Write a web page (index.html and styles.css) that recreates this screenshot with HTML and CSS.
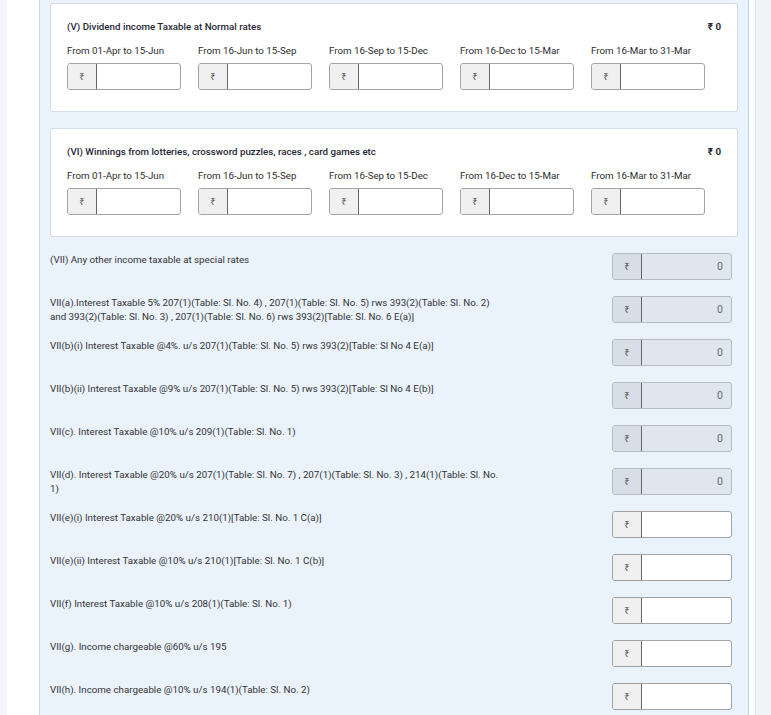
FILE: index.html
```html
<!DOCTYPE html>
<html lang="en">
<head>
    <meta charset="UTF-8" />
    <title>Income from Other Sources - Quarterly Breakup</title>
    <link rel="stylesheet" href="styles.css">
</head>
<body>
    <div class="page">
        <div class="gutter"></div>
        <div class="main">
            <div class="panel">

                <div class="card">
                    <div class="card-head">
                        <span class="card-title">(V) Dividend income Taxable at Normal rates</span>
                        <span class="card-total">₹ 0</span>
                    </div>
                    <div class="quarters">
                        <div class="quarter">
                            <label>From 01-Apr to 15-Jun</label>
                            <div class="amount"><span class="rs">₹</span><input type="text"></div>
                        </div>
                        <div class="quarter">
                            <label>From 16-Jun to 15-Sep</label>
                            <div class="amount"><span class="rs">₹</span><input type="text"></div>
                        </div>
                        <div class="quarter">
                            <label>From 16-Sep to 15-Dec</label>
                            <div class="amount"><span class="rs">₹</span><input type="text"></div>
                        </div>
                        <div class="quarter">
                            <label>From 16-Dec to 15-Mar</label>
                            <div class="amount"><span class="rs">₹</span><input type="text"></div>
                        </div>
                        <div class="quarter">
                            <label>From 16-Mar to 31-Mar</label>
                            <div class="amount"><span class="rs">₹</span><input type="text"></div>
                        </div>
                    </div>
                </div>

                <div class="card">
                    <div class="card-head">
                        <span class="card-title">(VI) Winnings from lotteries, crossword puzzles, races , card games etc</span>
                        <span class="card-total">₹ 0</span>
                    </div>
                    <div class="quarters">
                        <div class="quarter">
                            <label>From 01-Apr to 15-Jun</label>
                            <div class="amount"><span class="rs">₹</span><input type="text"></div>
                        </div>
                        <div class="quarter">
                            <label>From 16-Jun to 15-Sep</label>
                            <div class="amount"><span class="rs">₹</span><input type="text"></div>
                        </div>
                        <div class="quarter">
                            <label>From 16-Sep to 15-Dec</label>
                            <div class="amount"><span class="rs">₹</span><input type="text"></div>
                        </div>
                        <div class="quarter">
                            <label>From 16-Dec to 15-Mar</label>
                            <div class="amount"><span class="rs">₹</span><input type="text"></div>
                        </div>
                        <div class="quarter">
                            <label>From 16-Mar to 31-Mar</label>
                            <div class="amount"><span class="rs">₹</span><input type="text"></div>
                        </div>
                    </div>
                </div>

                <div class="line-item">
                    <div class="line-label">(VII) Any other income taxable at special rates</div>
                    <div class="amount readonly"><span class="rs">₹</span><input type="text" value="0" readonly></div>
                </div>
                <div class="line-item">
                    <div class="line-label">VII(a).Interest Taxable 5% 207(1)(Table: Sl. No. 4) , 207(1)(Table: Sl. No. 5) rws 393(2)(Table: Sl. No. 2) and 393(2)(Table: Sl. No. 3) , 207(1)(Table: Sl. No. 6) rws 393(2)[Table: Sl. No. 6 E(a)]</div>
                    <div class="amount readonly"><span class="rs">₹</span><input type="text" value="0" readonly></div>
                </div>
                <div class="line-item">
                    <div class="line-label">VII(b)(i) Interest Taxable @4%. u/s 207(1)(Table: Sl. No. 5) rws 393(2)[Table: Sl No 4 E(a)]</div>
                    <div class="amount readonly"><span class="rs">₹</span><input type="text" value="0" readonly></div>
                </div>
                <div class="line-item">
                    <div class="line-label">VII(b)(ii) Interest Taxable @9% u/s 207(1)(Table: Sl. No. 5) rws 393(2)[Table: Sl No 4 E(b)]</div>
                    <div class="amount readonly"><span class="rs">₹</span><input type="text" value="0" readonly></div>
                </div>
                <div class="line-item">
                    <div class="line-label">VII(c). Interest Taxable @10% u/s 209(1)(Table: Sl. No. 1)</div>
                    <div class="amount readonly"><span class="rs">₹</span><input type="text" value="0" readonly></div>
                </div>
                <div class="line-item">
                    <div class="line-label">VII(d). Interest Taxable @20% u/s 207(1)(Table: Sl. No. 7) , 207(1)(Table: Sl. No. 3) , 214(1)(Table: Sl. No. 1)</div>
                    <div class="amount readonly"><span class="rs">₹</span><input type="text" value="0" readonly></div>
                </div>
                <div class="line-item">
                    <div class="line-label">VII(e)(i) Interest Taxable @20% u/s 210(1)[Table: Sl. No. 1 C(a)]</div>
                    <div class="amount"><span class="rs">₹</span><input type="text"></div>
                </div>
                <div class="line-item">
                    <div class="line-label">VII(e)(ii) Interest Taxable @10% u/s 210(1)[Table: Sl. No. 1 C(b)]</div>
                    <div class="amount"><span class="rs">₹</span><input type="text"></div>
                </div>
                <div class="line-item">
                    <div class="line-label">VII(f) Interest Taxable @10% u/s 208(1)(Table: Sl. No. 1)</div>
                    <div class="amount"><span class="rs">₹</span><input type="text"></div>
                </div>
                <div class="line-item">
                    <div class="line-label">VII(g). Income chargeable @60% u/s 195</div>
                    <div class="amount"><span class="rs">₹</span><input type="text"></div>
                </div>
                <div class="line-item">
                    <div class="line-label">VII(h). Income chargeable @10% u/s 194(1)(Table: Sl. No. 2)</div>
                    <div class="amount"><span class="rs">₹</span><input type="text"></div>
                </div>

            </div>
        </div>
        <div class="rail"></div>
    </div>
</body>
</html>
```

FILE: styles.css
```css
body {
    margin: 0;
    padding: 0;
    background: #f3f5f9;
    font-family: Roboto, "Noto Sans", "DejaVu Sans", sans-serif;
    font-size: 9.75px;
    color: #333;
}

.page {
    display: flex;
    min-height: 715px;
}

.gutter {
    width: 7px;
    flex-shrink: 0;
    background: #f3f5f9;
}

.main {
    width: 748px;
    flex-shrink: 0;
    box-sizing: border-box;
    background: white;
    padding: 0 6px 0 32px;
}

.rail {
    flex: 1;
    background: #f2f4f8;
    border-left: 1px solid #e1e5ee;
}

.panel {
    min-height: 715px;
    box-sizing: border-box;
    background: #eaf2fc;
    border-left: 1px solid #c8dcf3;
    border-right: 1px solid #b9d4f1;
    padding: 3px 10px 10px 10px;
}

.card {
    background: white;
    border: 1px solid #d3dae6;
    border-radius: 3px;
    padding: 16px 16px 21px 16px;
    margin-bottom: 16px;
}

.card-head {
    display: flex;
    justify-content: space-between;
    line-height: 14px;
    margin-bottom: 10px;
}

.card-title {
    font-weight: 500;
    color: #1f2733;
}

.card-total {
    font-weight: 700;
    color: #1f2733;
}

.quarters {
    display: flex;
    gap: 17px;
}

.quarter {
    width: 114px;
}

.quarter label {
    display: block;
    line-height: 14px;
    margin-bottom: 5px;
    color: #2b2b2b;
}

.amount {
    display: flex;
    width: 114px;
    height: 27px;
    box-sizing: border-box;
    border: 1px solid #a3a3a3;
    border-radius: 3px;
    background: white;
    overflow: hidden;
}

.rs {
    width: 28px;
    flex-shrink: 0;
    display: flex;
    align-items: center;
    justify-content: center;
    background: #f0f0f0;
    border-right: 1px solid #666;
    font-family: "Noto Sans", "DejaVu Sans", sans-serif;
    font-size: 9.5px;
    color: #4a4a4a;
}

.amount input {
    flex: 1;
    min-width: 0;
    border: none;
    outline: none;
    background: transparent;
    padding: 0 8px 0 10px;
    font-family: Roboto, "Noto Sans", sans-serif;
    font-size: 10.5px;
    color: #666;
    text-align: right;
}

.amount.readonly {
    background: #e0e6ef;
    border-color: #b6bcc6;
}

.amount.readonly .rs {
    background: #d8dee7;
}

.line-item {
    display: flex;
    justify-content: space-between;
    align-items: flex-start;
    margin-bottom: 16px;
    padding-right: 6px;
}

.line-label {
    width: 450px;
    line-height: 13.5px;
    color: #333;
}

.line-item .amount {
    width: 120px;
}
```
